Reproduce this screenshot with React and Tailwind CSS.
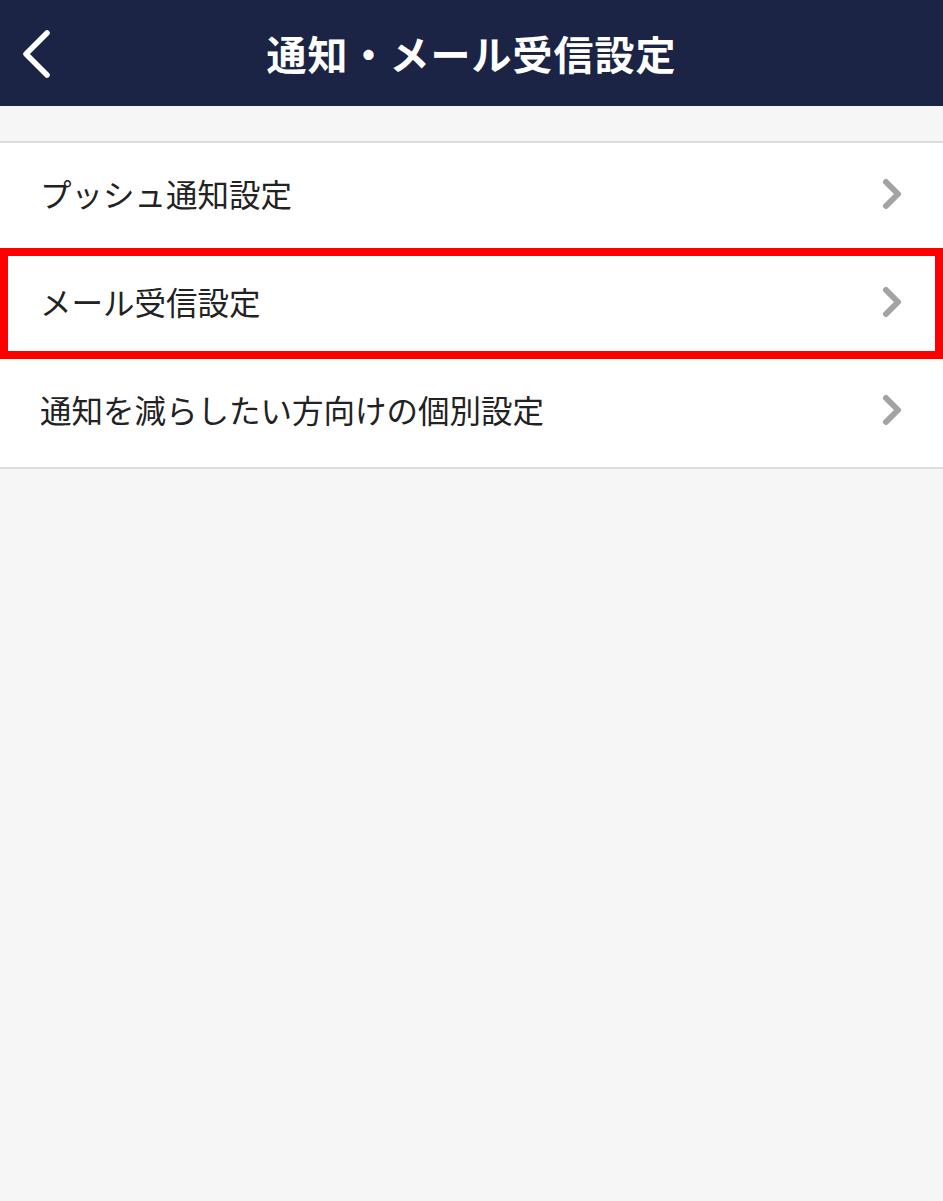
const Chevron = () => (
  <svg width="24" height="32" viewBox="0 0 24 32" fill="none">
    <path d="M5 4l12 12-12 12" stroke="#a3a3a3" strokeWidth="6" strokeLinecap="round" strokeLinejoin="round" />
  </svg>
);

const Row = ({ label }) => (
  <div className="flex h-[108px] items-center justify-between pb-[6px] pl-[40px] pr-[38px]">
    <span className="text-[31.5px] leading-none text-[#222222]">{label}</span>
    <Chevron />
  </div>
);

export default function App() {
  return (
    <div
      className="min-h-[1201px] w-full bg-[#f6f6f6]"
      style={{ fontFamily: '"Noto Sans CJK JP", "Noto Sans", sans-serif' }}
    >
      <header className="relative flex h-[106px] items-center justify-center bg-[#1b2445]">
        <svg className="absolute left-[18px] top-[28px]" width="36" height="52" viewBox="0 0 36 52" fill="none">
          <path d="M29 5L8 26l21 21" stroke="#ffffff" strokeWidth="5.5" strokeLinecap="round" strokeLinejoin="round" />
        </svg>
        <h1 className="text-[40px] font-bold tracking-[1px] text-white">通知・メール受信設定</h1>
      </header>

      <div className="mt-[35px] border-y-2 border-[#dcdcdc] bg-white">
        <Row label="プッシュ通知設定" />
        <div className="relative">
          <Row label="メール受信設定" />
          <div className="pointer-events-none absolute left-0 right-0 top-[-3px] bottom-[0px] border-[8px] border-[#ff0000]" />
        </div>
        <Row label="通知を減らしたい方向けの個別設定" />
      </div>
    </div>
  );
}
